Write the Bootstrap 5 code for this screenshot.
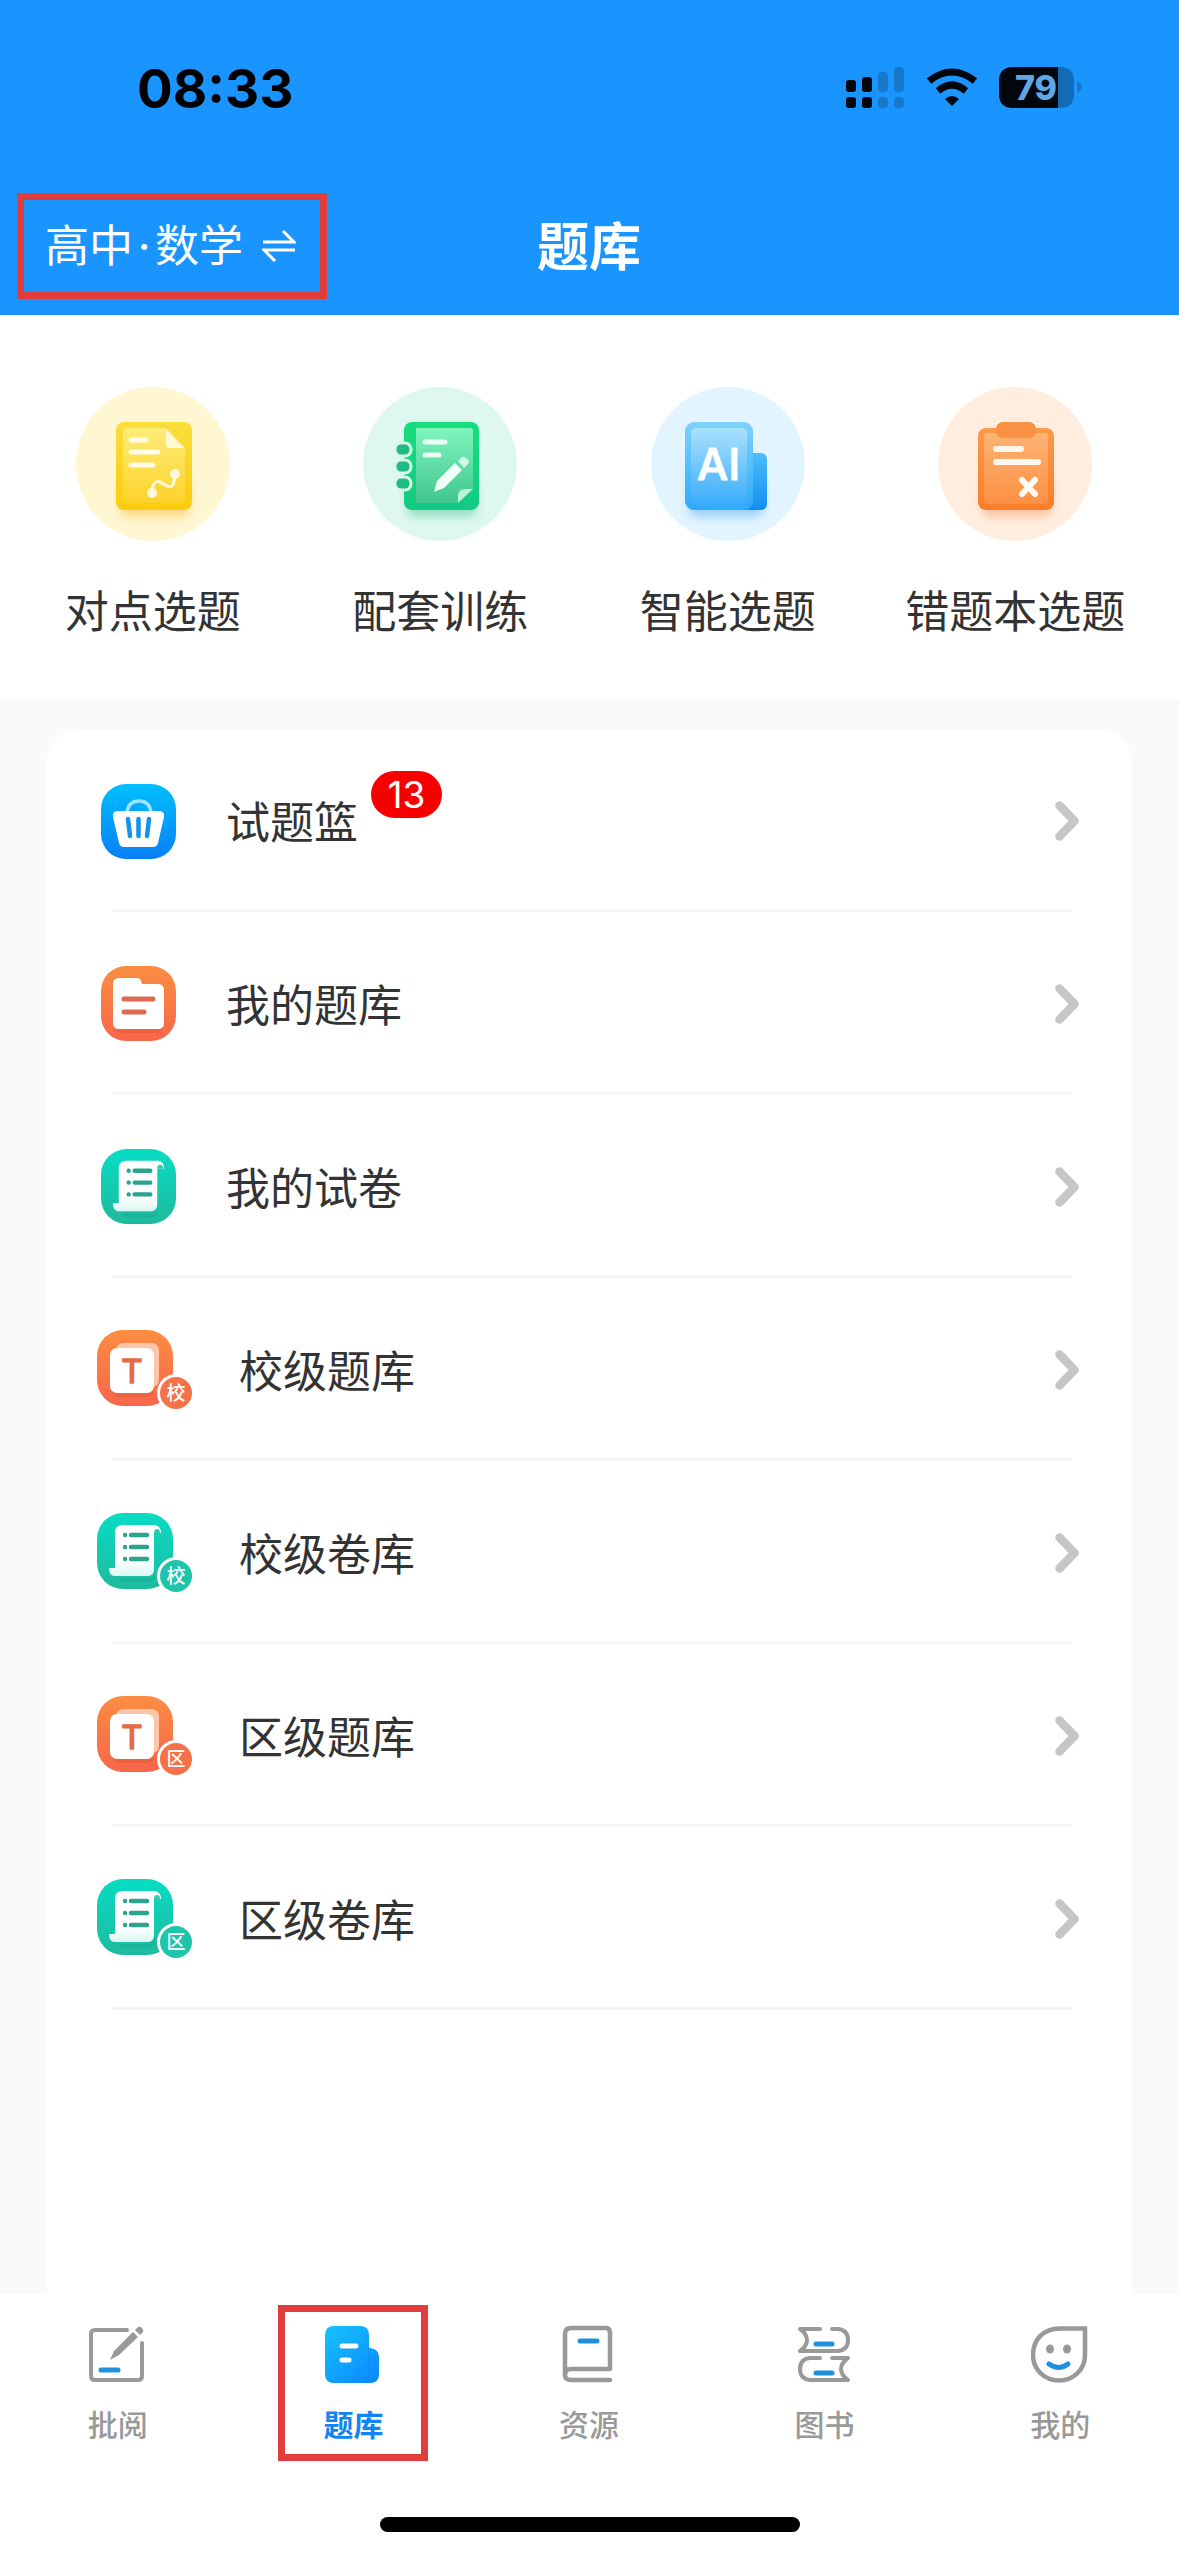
<!DOCTYPE html>
<html lang="zh-CN">
<head>
<meta charset="utf-8">
<meta name="viewport" content="width=device-width, initial-scale=1">
<title>题库</title>
<link href="https://cdn.jsdelivr.net/npm/bootstrap@5.3.0/dist/css/bootstrap.min.css" rel="stylesheet">
<style>
  body { font-family: "Noto Sans CJK SC", "Noto Sans", sans-serif; color: #333; background: #fff; }
  a { color: inherit; text-decoration: none; }
  svg { display: block; flex: none; }
  .top-area { background: #1a95ff; }
  .status-bar { height: 177px; padding: 0 97px 0 137px; }
  .status-inner { height: 110px; padding-top: 66px; }
  .clock-text { font: 700 53px/46px Inter, sans-serif; color: #000; }
  .title-bar { height: 138px; padding: 0 18px 0 17px; }
  .subject-btn { width: 310px; height: 106px; border: 7px solid #e23d3d; background: none; color: #fff; font-size: 44px; line-height: 1; padding: 0 24px 0 21px; }
  .subject-text { padding-bottom: 3px; }
  .mid-dot { display: inline-block; width: 22px; text-align: center; font-family: Inter, sans-serif; }
  .page-title { font-size: 52px; line-height: 1; font-weight: 700; color: #fff; padding-bottom: 4px; }
  .quick-area { padding: 72px 20px 60px 9px; height: 385px; }
  .quick-label { font-size: 44px; line-height: 60px; margin-top: 38px; white-space: nowrap; }
  .list-area { background: #fafafa; padding: 30px 47px 0; }
  .list-panel { background: #fff; border-radius: 32px 32px 0 0; }
  .list-row { height: 183px; padding: 0 53px 0 54px; font-size: 44px; line-height: 60px; position: relative; }
  .list-row:first-child { height: 182px; }
  .list-row::after { content: ""; position: absolute; left: 65px; right: 60px; bottom: 0; height: 3px; background: #f5f5f5; }
  .row-label { margin-left: 50px; padding-bottom: 2px; }
  .row-wide { padding-left: 50px; }
  .row-wide .row-label { margin-left: 46px; }
  .count-pill { left: 324px; top: 41px; width: 71px; height: 47px; border-radius: 24px; background: #f90000; color: #fff; font: 400 37px/47px Inter, sans-serif; }
  .tab-area { padding: 11px 1px 0 0; height: 223px; }
  .tab-link { width: 150px; height: 156px; border: 7px solid transparent; font-size: 30px; line-height: 40px; font-weight: 500; color: #999; padding-top: 13px; }
  .tab-link.is-on { border-color: #e23d3d; color: #1285f5; font-weight: 700; }
  .tab-link span { margin-top: 20px; }
  .home-bar { width: 420px; height: 15px; border-radius: 8px; background: #000; }
</style>
</head>
<body>
<svg width="0" height="0" class="position-absolute" aria-hidden="true">
  <defs>
    <linearGradient id="gTeal" x1="0" y1="0" x2="0" y2="1"><stop offset="0" stop-color="#08dcc4"/><stop offset="1" stop-color="#1fba9e"/></linearGradient>
    <linearGradient id="gOrange" x1="0" y1="0" x2="0" y2="1"><stop offset="0" stop-color="#fb8d42"/><stop offset="1" stop-color="#f8664a"/></linearGradient>
    <linearGradient id="gBlue" x1="0" y1="0" x2="0" y2="1"><stop offset="0" stop-color="#00bfff"/><stop offset="1" stop-color="#087ff5"/></linearGradient>
    <linearGradient id="gPaper" x1="0" y1="0" x2="0" y2="1"><stop offset=".7" stop-color="#fff"/><stop offset="1" stop-color="#d9f7f1"/></linearGradient>
    <filter id="soft" x="-30%" y="-30%" width="160%" height="160%"><feGaussianBlur stdDeviation="5"/></filter>
    <symbol id="scroll" viewBox="0 0 76 76">
      <rect width="76" height="76" rx="26" fill="url(#gTeal)"/>
      <path d="M20 65h32q6-1 6-8v5q0 7-8 7H24z" fill="#14a58c" opacity=".4"/>
      <path d="M25 12h33q6 1 6 8h-7v36q0 7-6 7H17q-5-1-5-8h6V19q0-6 7-7z" fill="url(#gPaper)"/>
      <path d="M57 20q0-4 3-4t3 4z" fill="#2fc9b1"/>
      <g stroke="#2aa38f" stroke-width="4.400" stroke-linecap="round"><path d="M28 22h.1M34 22h16M28 34h.1M34 34h16M28 46h.1M34 46h16"/></g>
    </symbol>
    <symbol id="tcard" viewBox="0 0 76 76">
      <rect width="76" height="76" rx="26" fill="url(#gOrange)"/>
      <rect x="19" y="13" width="43" height="44" rx="7" fill="#ffc5a8"/>
      <rect x="15" y="24" width="42" height="43" rx="7" fill="#d9512f" opacity=".35"/>
      <rect x="13" y="18" width="44" height="45" rx="7" fill="#fff"/>
      <text x="35" y="53" text-anchor="middle" font-family="Inter, sans-serif" font-weight="400" font-size="33" fill="#e56a45" stroke="#e56a45" stroke-width="1.500" stroke-linejoin="round">T</text>
    </symbol>
    <symbol id="chev" viewBox="0 0 24 40"><path d="M4.500 4.500L19.500 20L4.500 35.500" fill="none" stroke="#c6c6c6" stroke-width="8.500" stroke-linecap="round" stroke-linejoin="round"/></symbol>
  </defs>
</svg>

<div class="min-vh-100 d-flex flex-column">
  <header class="top-area">
    <div class="status-bar">
      <div class="status-inner d-flex justify-content-between">
        <span class="clock-text">08:33</span>
        <div class="d-flex">
          <svg width="236" height="44" viewBox="0 0 236 44" role="img" aria-label="信号 无线 电量">
            <g fill="#02060d"><rect x="0" y="14" width="10" height="12" rx="3"/><rect x="16" y="11" width="10" height="15" rx="3"/><rect x="0" y="31" width="10" height="11" rx="3"/><rect x="16" y="31" width="10" height="11" rx="3"/></g>
            <g fill="#1777c9"><rect x="32" y="6" width="10" height="20" rx="4"/><rect x="48" y="1" width="10" height="25" rx="4"/><rect x="32" y="31" width="10" height="11" rx="4"/><rect x="48" y="31" width="10" height="11" rx="4"/></g>
            <g fill="none" stroke="#02060d" stroke-width="7"><path d="M83 15Q106 -3 129 15"/><path d="M92 25Q106 13 120 25"/></g>
            <path d="M99 33Q106 27 113 33L106 40z" fill="#02060d"/>
            <path d="M167 1h45v41h-45q-14 0-14-14V15q0-14 14-14z" fill="#02060d"/>
            <path d="M212 1h2q14 0 14 14v13q0 14-14 14h-2z" fill="#146bb5"/>
            <path d="M231 15q5 2 5 6t-5 6z" fill="#1777c9"/>
            <text x="190" y="34" text-anchor="middle" font-family="Inter, sans-serif" font-weight="800" font-size="34" fill="#5fa6e6">79</text>
          </svg>
        </div>
      </div>
    </div>
    <div class="title-bar d-flex align-items-center">
      <div class="flex-fill w-100">
        <button type="button" class="subject-btn d-flex align-items-center justify-content-between">
          <span class="subject-text text-nowrap">高中<span class="mid-dot">·</span>数学</span>
          <svg width="34" height="32" viewBox="0 0 34 32" fill="none" stroke="#fff" stroke-width="3"><path d="M1 12h31L21 1M33 20H2l11 11"/></svg>
        </button>
      </div>
      <h1 class="page-title m-0 text-nowrap">题库</h1>
      <div class="flex-fill w-100"></div>
    </div>
  </header>

  <nav class="quick-area bg-white" aria-label="选题方式">
    <div class="row g-0 row-cols-4 text-center">
      <a href="#" class="col d-flex flex-column align-items-center">
        <svg width="154" height="154" viewBox="0 0 154 154">
          <defs><linearGradient id="y1" x1="0" y1="0" x2="0" y2="1"><stop offset="0" stop-color="#f9de3c"/><stop offset="1" stop-color="#fccb0e"/></linearGradient><linearGradient id="y2" x1="0" y1="0" x2="0" y2="1"><stop offset="0" stop-color="#fdec79"/><stop offset="1" stop-color="#fdd22a"/></linearGradient></defs>
          <circle cx="77" cy="77" r="77" fill="#fff6d2"/>
          <rect x="44" y="92" width="70" height="38" rx="8" fill="#fbc24a" opacity=".55" filter="url(#soft)"/>
          <rect x="40" y="35" width="76" height="88" rx="8" fill="url(#y1)"/>
          <path d="M51 41H90l19 19v52q0 4-4 4H51q-4 0-4-4V45q0-4 4-4z" fill="url(#y2)"/>
          <path d="M90 42l18 19H94q-4 0-4-4z" fill="#fff8d0"/>
          <path d="M55 53h15M55 65h27M55 78h22" stroke="#fffbe6" stroke-width="5" stroke-linecap="round"/>
          <path d="M76 106C76 96 80 92 86 96C92 100 97 102 98 94L99 87" fill="none" stroke="#fff8dc" stroke-width="3"/>
          <circle cx="76" cy="106" r="5" fill="#fff8dc"/><circle cx="99" cy="87" r="5" fill="#fff8dc"/>
        </svg>
        <span class="quick-label">对点选题</span>
      </a>
      <a href="#" class="col d-flex flex-column align-items-center">
        <svg width="154" height="154" viewBox="0 0 154 154">
          <defs><linearGradient id="e1" x1="0" y1="0" x2="0" y2="1"><stop offset="0" stop-color="#17de7e"/><stop offset="1" stop-color="#12ca83"/></linearGradient><linearGradient id="e2" x1="0" y1="0" x2="0" y2="1"><stop offset="0" stop-color="#7ff5bd"/><stop offset="1" stop-color="#41c68f"/></linearGradient></defs>
          <circle cx="77" cy="77" r="77" fill="#dff8ef"/>
          <rect x="44" y="92" width="70" height="38" rx="8" fill="#4fc99a" opacity=".5" filter="url(#soft)"/>
          <rect x="41" y="35" width="75" height="88" rx="8" fill="url(#e1)"/>
          <path d="M53 41h54q3 0 3 3v58L95 116H53z" fill="url(#e2)"/>
          <path d="M110 102L95 116V108q1-6 7-6z" fill="#b9f3d8"/>
          <path d="M62 55h20M62 68h14" stroke="#e9fff4" stroke-width="5" stroke-linecap="round"/>
          <path d="M71 105l3-11L92 76l7 7L81 101z" fill="#effff7"/><path d="M95 74l4-4q2-1 4 1l2 2q2 2 0 4l-4 4z" fill="#d3fae7"/>
          <g fill="#20bb81" stroke="#d9f8ea" stroke-width="3"><rect x="32" y="56" width="16" height="13" rx="6"/><rect x="32" y="73" width="16" height="13" rx="6"/><rect x="32" y="90" width="16" height="13" rx="6"/></g>
        </svg>
        <span class="quick-label">配套训练</span>
      </a>
      <a href="#" class="col d-flex flex-column align-items-center">
        <svg width="154" height="154" viewBox="0 0 154 154">
          <defs><linearGradient id="b1" x1="0" y1="0" x2="0" y2="1"><stop offset="0" stop-color="#7fd3f9"/><stop offset="1" stop-color="#2fa9fb"/></linearGradient><linearGradient id="b2" x1="0" y1="0" x2="0" y2="1"><stop offset="0" stop-color="#a9e1fb"/><stop offset="1" stop-color="#3badfb"/></linearGradient><linearGradient id="b3" x1="0" y1="0" x2="0" y2="1"><stop offset="0" stop-color="#4dbdf9"/><stop offset="1" stop-color="#108ff3"/></linearGradient></defs>
          <circle cx="77" cy="77" r="77" fill="#e2f4ff"/>
          <rect x="38" y="92" width="74" height="38" rx="8" fill="#55adf0" opacity=".5" filter="url(#soft)"/>
          <rect x="82" y="66" width="34" height="57" rx="6" fill="url(#b3)"/>
          <rect x="34" y="35" width="68" height="88" rx="9" fill="url(#b1)"/>
          <rect x="40" y="41" width="56" height="76" rx="5" fill="url(#b2)"/>
          <text x="46" y="93" font-family="Inter, sans-serif" font-weight="500" font-size="44" fill="#fff" stroke="#fff" stroke-width="1" stroke-linejoin="round">AI</text>
        </svg>
        <span class="quick-label">智能选题</span>
      </a>
      <a href="#" class="col d-flex flex-column align-items-center">
        <svg width="154" height="154" viewBox="0 0 154 154">
          <defs><linearGradient id="o1" x1="0" y1="0" x2="0" y2="1"><stop offset="0" stop-color="#fa9a4c"/><stop offset="1" stop-color="#fb7d27"/></linearGradient><linearGradient id="o2" x1="0" y1="0" x2="0" y2="1"><stop offset="0" stop-color="#fdb374"/><stop offset="1" stop-color="#fc9043"/></linearGradient></defs>
          <circle cx="77" cy="77" r="77" fill="#ffeee0"/>
          <rect x="44" y="92" width="70" height="38" rx="8" fill="#f79a63" opacity=".5" filter="url(#soft)"/>
          <rect x="40" y="41" width="76" height="82" rx="8" fill="url(#o1)"/>
          <rect x="46" y="46" width="64" height="71" rx="4" fill="url(#o2)"/>
          <rect x="58" y="35" width="40" height="16" rx="7" fill="#fa9144"/>
          <path d="M58 62h25M58 75h42" stroke="#fff6ee" stroke-width="6" stroke-linecap="round"/>
          <path d="M84 93l13 14M97 93L84 107" stroke="#fffaf4" stroke-width="6" stroke-linecap="round"/>
        </svg>
        <span class="quick-label">错题本选题</span>
      </a>
    </div>
  </nav>

  <main class="list-area flex-fill d-flex flex-column">
    <div class="list-panel flex-fill">
      <a href="#" class="list-row d-flex align-items-center">
        <svg width="75" height="75" viewBox="0 0 75 75"><rect width="75" height="75" rx="25" fill="url(#gBlue)"/><path d="M26 29q1-12 12-12t12 12" fill="none" stroke="#9be4ff" stroke-width="3.500"/><path d="M17 27h41q6 0 5 6l-6 26q-1 4-5 4H23q-4 0-5-4l-6-26q-1-6 5-6z" fill="#fff"/><path d="M27 35l2 17M37.500 35v17M48 35l-2 17" stroke="#1593ea" stroke-width="4.500" stroke-linecap="round"/></svg>
        <span class="row-label flex-fill">试题篮</span>
        <span class="count-pill position-absolute text-center">13</span>
        <svg width="24" height="40"><use href="#chev"/></svg>
      </a>
      <a href="#" class="list-row d-flex align-items-center">
        <svg width="75" height="75" viewBox="0 0 75 75"><rect width="75" height="75" rx="25" fill="url(#gOrange)"/><rect x="14" y="30" width="48" height="37" rx="7" fill="#d9512f" opacity=".35"/><path d="M18 12h18q4 0 5 6h16q6 0 6 6v33q0 6-6 6H18q-6 0-6-6V18q0-6 6-6z" fill="#fff"/><path d="M23 33h29M23 46h20" stroke="#dd6a50" stroke-width="5" stroke-linecap="round"/></svg>
        <span class="row-label flex-fill">我的题库</span>
        <svg width="24" height="40"><use href="#chev"/></svg>
      </a>
      <a href="#" class="list-row d-flex align-items-center">
        <svg width="75" height="75"><use href="#scroll"/></svg>
        <span class="row-label flex-fill">我的试卷</span>
        <svg width="24" height="40"><use href="#chev"/></svg>
      </a>
      <a href="#" class="list-row row-wide d-flex align-items-center">
        <svg width="96" height="80"><use href="#tcard" width="76" height="76"/><circle cx="79" cy="63" r="19" fill="#fff"/><circle cx="79" cy="63" r="16" fill="#f5714a"/><text x="79" y="70" text-anchor="middle" font-size="19" font-weight="500" fill="#fff">校</text></svg>
        <span class="row-label flex-fill">校级题库</span>
        <svg width="24" height="40"><use href="#chev"/></svg>
      </a>
      <a href="#" class="list-row row-wide d-flex align-items-center">
        <svg width="96" height="80"><use href="#scroll" width="76" height="76"/><circle cx="79" cy="63" r="19" fill="#fff"/><circle cx="79" cy="63" r="16" fill="#20c4aa"/><text x="79" y="70" text-anchor="middle" font-size="19" font-weight="500" fill="#fff">校</text></svg>
        <span class="row-label flex-fill">校级卷库</span>
        <svg width="24" height="40"><use href="#chev"/></svg>
      </a>
      <a href="#" class="list-row row-wide d-flex align-items-center">
        <svg width="96" height="80"><use href="#tcard" width="76" height="76"/><circle cx="79" cy="63" r="19" fill="#fff"/><circle cx="79" cy="63" r="16" fill="#f5714a"/><text x="79" y="70" text-anchor="middle" font-size="19" font-weight="500" fill="#fff">区</text></svg>
        <span class="row-label flex-fill">区级题库</span>
        <svg width="24" height="40"><use href="#chev"/></svg>
      </a>
      <a href="#" class="list-row row-wide d-flex align-items-center">
        <svg width="96" height="80"><use href="#scroll" width="76" height="76"/><circle cx="79" cy="63" r="19" fill="#fff"/><circle cx="79" cy="63" r="16" fill="#20c4aa"/><text x="79" y="70" text-anchor="middle" font-size="19" font-weight="500" fill="#fff">区</text></svg>
        <span class="row-label flex-fill">区级卷库</span>
        <svg width="24" height="40"><use href="#chev"/></svg>
      </a>
    </div>
  </main>

  <footer class="bg-white">
    <nav class="tab-area row g-0 row-cols-5 align-items-start" aria-label="主导航">
      <div class="col d-flex justify-content-center"><a href="#" class="tab-link d-flex flex-column align-items-center">
        <svg width="58" height="58" viewBox="0 0 58 58" fill="none" stroke="#999" stroke-width="4" stroke-linecap="round"><path d="M38 5H6Q2 5 2 9V51Q2 55 6 55H49Q53 55 53 51V18"/><path d="M21 35l4-9L44 7l5 5L30 30z" fill="#999" stroke="none"/><path d="M46 5l3-3q2-1 4 1t1 4l-3 3z" fill="#999" stroke="none"/><path d="M12 45h17" stroke="#1f8fe0" stroke-width="5"/></svg>
        <span>批阅</span></a></div>
      <div class="col d-flex justify-content-center"><a href="#" class="tab-link is-on d-flex flex-column align-items-center" aria-current="page">
        <svg width="58" height="58" viewBox="0 0 58 58"><defs><linearGradient id="tb" x1="0" y1="0" x2=".8" y2="1"><stop offset="0" stop-color="#17c3fb"/><stop offset="1" stop-color="#0b8bff"/></linearGradient></defs><path d="M10 1H36q9 0 9 9V23h1q9 1 9 9V49q0 9-9 9H10q-9 0-9-9V10q0-9 9-9z" fill="url(#tb)"/><path d="M45 23V46q0 8-5 12" fill="none" stroke="#0a84f0" stroke-width="1" opacity=".4"/><path d="M18 21h14M18 35h7" stroke="#fff" stroke-width="5" stroke-linecap="round"/></svg>
        <span>题库</span></a></div>
      <div class="col d-flex justify-content-center"><a href="#" class="tab-link d-flex flex-column align-items-center">
        <svg width="58" height="58" viewBox="0 0 58 58" fill="none" stroke="#999" stroke-width="4.500" stroke-linecap="round" stroke-linejoin="round"><path d="M50 44V8Q50 3 46 3H11Q5 3 5 9V50Q5 55 11 55H50M50 44H11Q5 44 5 50"/><path d="M20 16h17" stroke="#1f8fe0" stroke-width="5"/></svg>
        <span>资源</span></a></div>
      <div class="col d-flex justify-content-center"><a href="#" class="tab-link d-flex flex-column align-items-center">
        <svg width="58" height="58" viewBox="0 0 58 58" fill="none" stroke="#999" stroke-width="4" stroke-linecap="round" stroke-linejoin="round"><path d="M24 4H4Q11 9 11 15T4 26H42Q52 25 52 15T42 4H36"/><path d="M24 33H14Q4 34 4 44T14 55H52Q45 50 45 44T52 33H36"/><path d="M20 19h16M20 48h16" stroke="#1f8fe0" stroke-width="5"/></svg>
        <span>图书</span></a></div>
      <div class="col d-flex justify-content-center"><a href="#" class="tab-link d-flex flex-column align-items-center">
        <svg width="58" height="58" viewBox="0 0 58 58" fill="none" stroke="#999" stroke-width="4.500"><path d="M54 3.500H29C12 3.500 2 15 2 30C2 45 14 55.500 28 55.500S54 45 54 30z"/><ellipse cx="19" cy="24" rx="4" ry="4.500" fill="#999" stroke="none"/><ellipse cx="36" cy="24" rx="4" ry="4.500" fill="#999" stroke="none"/><path d="M18 39q10 7 19 0" stroke="#1f8fe0" stroke-width="5" stroke-linecap="round"/></svg>
        <span>我的</span></a></div>
    </nav>
    <div class="pb-4 d-flex justify-content-center"><div class="home-bar"></div></div>
  </footer>
</div>
<script src="https://cdn.jsdelivr.net/npm/bootstrap@5.3.0/dist/js/bootstrap.bundle.min.js"></script>
</body>
</html>
